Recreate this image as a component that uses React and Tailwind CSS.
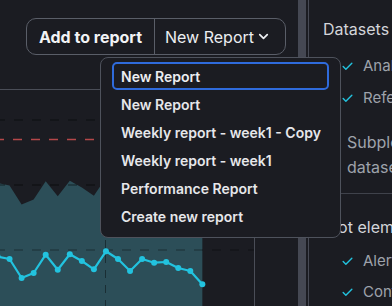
import React from 'react';

const seriesY = [256.5, 259, 278, 273, 254.7, 269.7, 254.3, 261, 269.3, 251.3, 259, 271, 259, 262.7, 262, 268, 271, 284.3];

const reports = [
    'New Report',
    'New Report',
    'Weekly report - week1 - Copy',
    'Weekly report - week1',
    'Performance Report',
    'Create new report',
];

function Check() {
    return (
        <svg className="shrink-0" width="13" height="13" viewBox="0 0 24 24" fill="none" stroke="#22c3df" strokeWidth="2.6" strokeLinecap="round" strokeLinejoin="round">
            <path d="M20 6 9 17l-5-5" />
        </svg>
    );
}

function CheckItem({ label }) {
    return (
        <div className="h-8 flex items-center gap-[9px] pl-[32px] whitespace-nowrap">
            <Check />
            <span className="text-[15px] text-[#9ea2ab]">{label}</span>
        </div>
    );
}

function Chart() {
    const pts = seriesY.map((y, i) => [-2.5 + 12.05 * i, y]);
    const line = pts.map(([x, y]) => `${x},${y}`).join(' ');
    const upper = pts.map(([x, y]) => `${x},${y - 73.5}`).join(' ');
    const last = pts[pts.length - 1][0];
    const band = `${upper} ${last},310 -2.5,310`;

    return (
        <svg width="254" height="216" viewBox="0 90 254 216" className="block">
            <polygon points={band} fill="#2c4e58" />
            <line x1="0" y1="120" x2="254" y2="120" stroke="#0d0e11" strokeWidth="1" strokeDasharray="9 9" strokeDashoffset="4" />
            <line x1="0" y1="139.5" x2="254" y2="139.5" stroke="#b5474a" strokeWidth="1.5" strokeDasharray="9 9" strokeDashoffset="5" />
            <line x1="0" y1="185" x2="254" y2="185" stroke="rgba(0,0,0,0.55)" strokeWidth="1" strokeDasharray="9 9" strokeDashoffset="4" />
            <line x1="0" y1="250" x2="254" y2="250" stroke="rgba(0,0,0,0.4)" strokeWidth="1" strokeDasharray="9 9" strokeDashoffset="4" />
            <line x1="105.5" y1="90" x2="105.5" y2="306" stroke="rgba(0,0,0,0.4)" strokeWidth="1" strokeDasharray="8 7" />
            <polyline points={line} fill="none" stroke="#22c3df" strokeWidth="2.2" strokeLinejoin="round" />
            {pts.map(([x, y], i) => (
                <circle key={i} cx={x} cy={y} r="3" fill="#22c3df" />
            ))}
        </svg>
    );
}

export default function App() {
    return (
        <div className="relative h-[306px] w-[392px] overflow-hidden bg-[#1b1c22] flex font-['Inter','Liberation_Sans',sans-serif]">
            <div className="w-[298px] flex flex-col shrink-0">
                <div className="h-[89px] flex justify-end items-start pt-[18px] pr-3">
                    <div className="h-[37px] flex items-stretch rounded-[10px] border border-[#5a5e68]">
                        <div className="flex items-center px-[12px] text-[16px] font-bold text-[#f2f3f5]">
                            Add to report
                        </div>
                        <div className="flex items-center gap-[2px] pl-[10px] pr-[14px] border-l border-[#5a5e68] text-[16px] text-[#eceef1]">
                            New Report
                            <svg className="shrink-0" width="15" height="15" viewBox="0 0 24 24" fill="none" stroke="#eceef1" strokeWidth="2.8" strokeLinecap="round" strokeLinejoin="round">
                                <path d="m6 9 6 6 6-6" />
                            </svg>
                        </div>
                    </div>
                </div>
                <div className="flex-1 w-[255px] border-t border-r border-[#4a4d57] overflow-hidden">
                    <Chart />
                </div>
            </div>

            <div className="w-2 shrink-0 bg-[#454853]" />
            <div className="w-[2px] shrink-0" />

            <div className="flex-1 min-w-0 border-l border-[#474a54] pt-[18px] overflow-hidden">
                <div className="pl-[14px] text-[16px] leading-[22px] text-[#d3d5da] whitespace-nowrap">Datasets</div>
                <div className="mt-[10px]">
                    <CheckItem label="Analysis" />
                    <CheckItem label="Reference" />
                </div>
                <div className="mt-[16px] pl-[38px] text-[16px] leading-[25px] text-[#9ea2ab] whitespace-nowrap">
                    Subplots per<br />dataset
                </div>
                <div className="mt-[13px] border-t border-[#3f424b]" />
                <div className="mt-[22px] pl-[15px] text-[16px] leading-[22px] text-[#d3d5da] whitespace-nowrap">Plot elements</div>
                <div className="mt-[7px]">
                    <CheckItem label="Alerts" />
                    <div className="mt-[-1px]">
                        <CheckItem label="Confidence band" />
                    </div>
                </div>
            </div>

            <div className="absolute left-[100px] top-[57px] w-[241px] rounded-lg border border-[#4e525c] bg-[#1b1c22] px-[11px] pt-[4px] pb-[7px]">
                {reports.map((r, i) => (
                    <div
                        key={i}
                        className={
                            i === 0
                                ? 'h-[28px] flex items-center px-[7px] rounded-[5px] border-2 border-[#2f6bdc] text-[14px] font-semibold text-[#eceef1] whitespace-nowrap'
                                : 'h-[28px] flex items-center px-[9px] text-[14px] font-semibold text-[#e6e7ea] whitespace-nowrap'
                        }
                    >
                        {r}
                    </div>
                ))}
            </div>
        </div>
    );
}
